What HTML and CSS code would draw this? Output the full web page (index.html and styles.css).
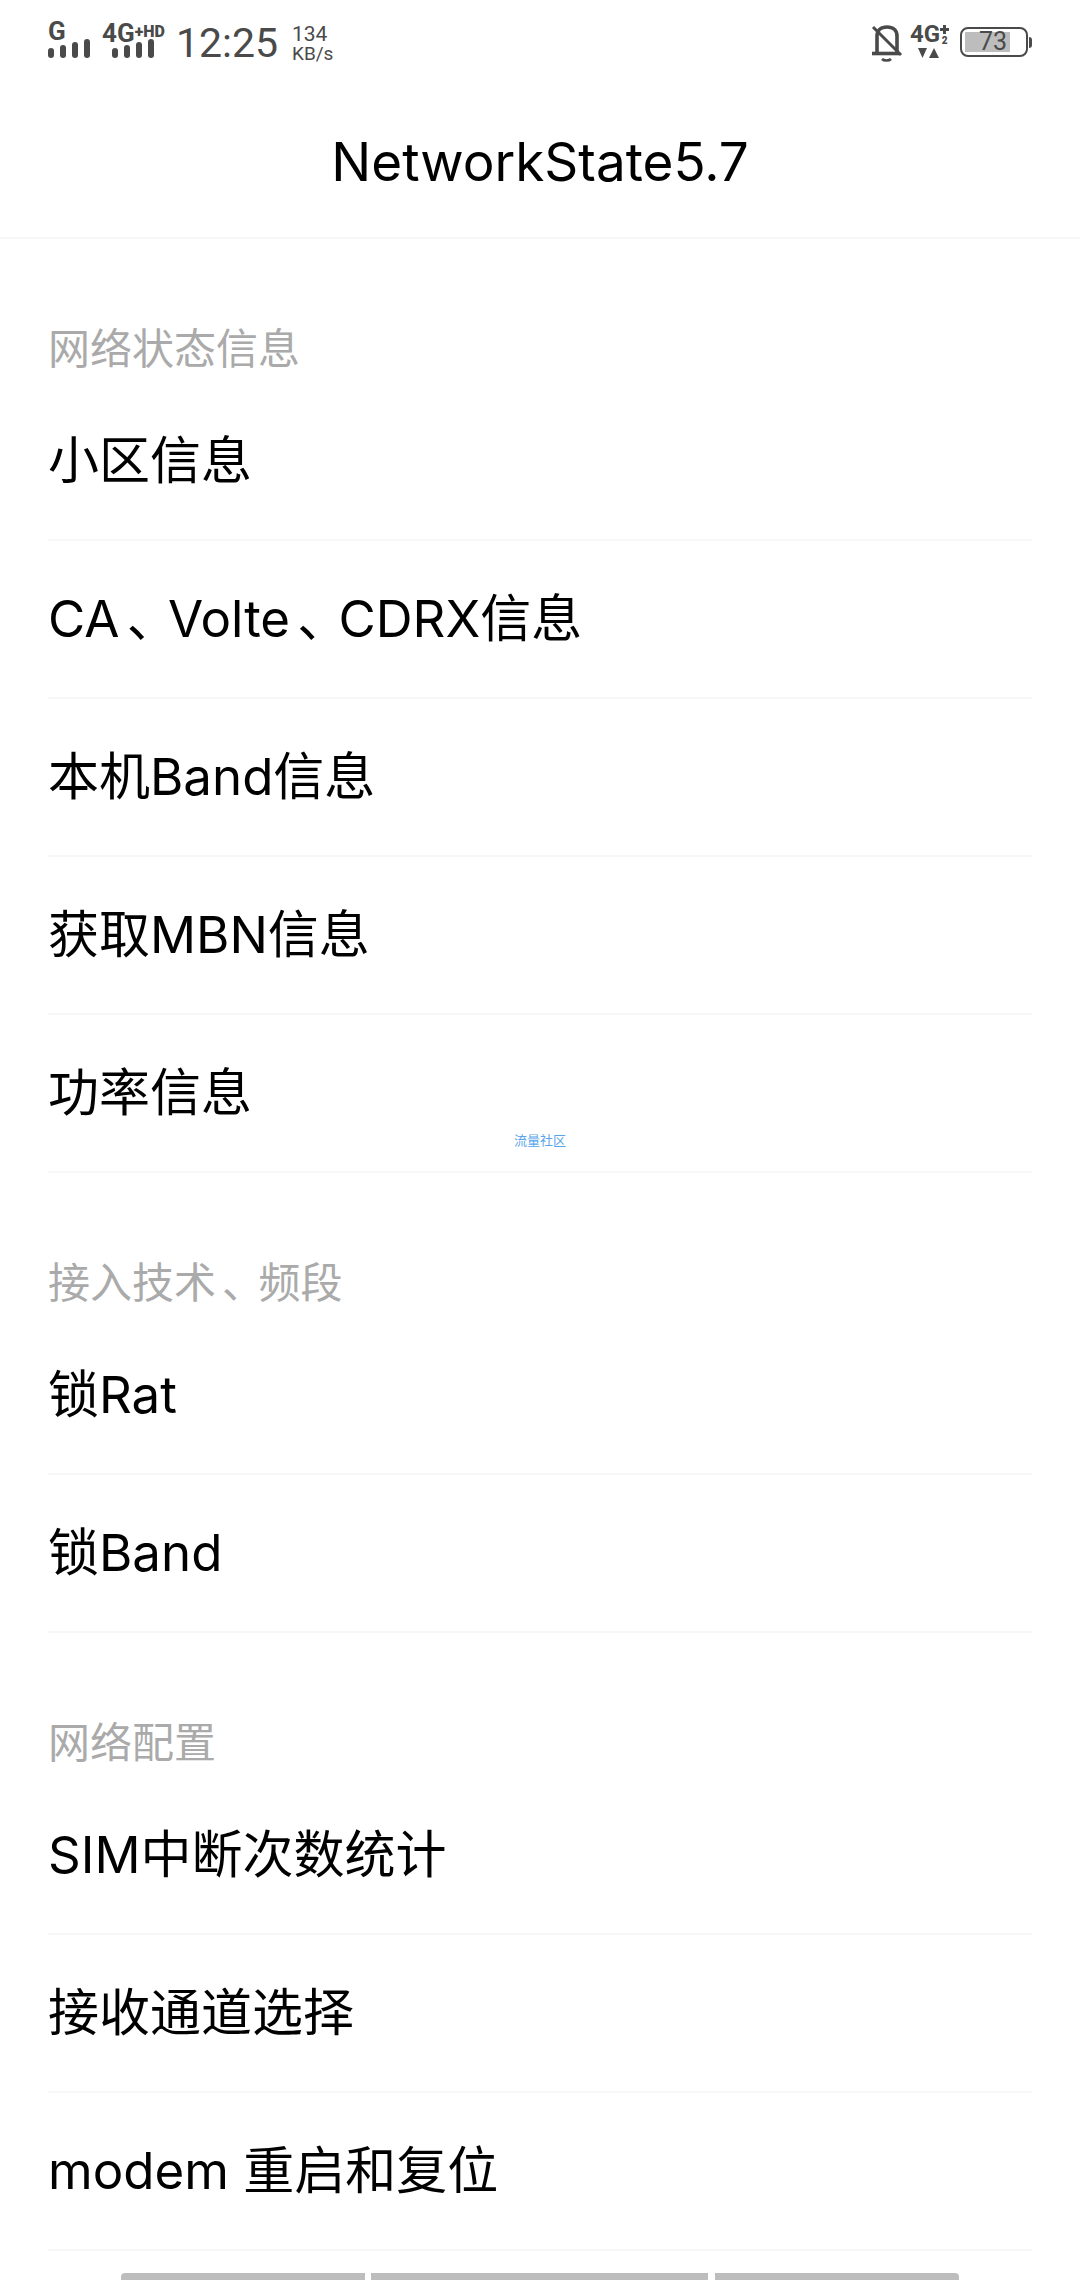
FILE: index.html
```html
<!DOCTYPE html>
<html lang="zh-CN">

<head>
    <meta charset="UTF-8">
    <meta name="viewport" content="width=device-width, initial-scale=1.0">
    <title>NetworkState5.7</title>
    <link rel="stylesheet" href="styles.css">
</head>

<body>

    <div class="screen">
        <!-- Status bar -->
        <div class="status-bar">
            <div class="status-left">
                <div class="signal signal-g">
                    <div class="signal-label">G</div>
                    <div class="bars"><i></i><i></i><i></i><i></i></div>
                </div>
                <div class="signal signal-4g">
                    <div class="signal-label">4G<span class="signal-extra">+HD</span></div>
                    <div class="bars"><i></i><i></i><i></i><i></i></div>
                </div>
                <div class="clock">12:25</div>
                <div class="speed">
                    <div class="speed-num">134</div>
                    <div>KB/s</div>
                </div>
            </div>
            <div class="status-right">
                <svg class="bell" width="34" height="38" viewBox="0 0 34 38" fill="none" stroke="#4a4a4a" stroke-width="3.6">
                    <path d="M7 28V12C7 6 11 3 17 3s10 3 10 9v16"/>
                    <path d="M2 29.5h27"/>
                    <path d="M12 35c2 2 7 2 9 0" stroke-width="2.6"/>
                    <path d="M3 3l28 28" stroke-width="3"/>
                </svg>
                <div class="net">
                    <div class="net-label">4G<span class="net-side">
                        <svg width="9" height="9" viewBox="0 0 9 9" stroke="#4a4a4a" stroke-width="3"><path d="M4.5 0v9M0 4.5h9"/></svg>
                        <b>2</b>
                    </span></div>
                    <svg class="net-arrows" width="21" height="10" viewBox="0 0 21 10" fill="#4a4a4a">
                        <path d="M0 0h9L4.5 10z"/>
                        <path d="M11 10h10L16 0z"/>
                    </svg>
                </div>
                <div class="battery">
                    <div class="battery-body">
                        <div class="battery-fill" style="width: 78%"></div>
                        <div class="battery-text">73</div>
                    </div>
                    <div class="battery-nub"></div>
                </div>
            </div>
        </div>

        <!-- Title -->
        <div class="title-bar">NetworkState5.7</div>

        <!-- Settings list -->
        <div class="section-title">网络状态信息</div>
        <div class="row">小区信息</div>
        <div class="row">CA<span class="comma">、</span>Volte<span class="comma">、</span>CDRX信息</div>
        <div class="row">本机Band信息</div>
        <div class="row">获取MBN信息</div>
        <div class="row">功率信息</div>

        <div class="section-title">接入技术<span class="comma">、</span>频段</div>
        <div class="row">锁Rat</div>
        <div class="row">锁Band</div>

        <div class="section-title">网络配置</div>
        <div class="row">SIM中断次数统计</div>
        <div class="row">接收通道选择</div>
        <div class="row">modem 重启和复位</div>

        <div class="scroll-tabs">
            <div class="tab tab-left"></div>
            <div class="tab tab-mid"></div>
            <div class="tab tab-right"></div>
        </div>

        <div class="watermark">流量社区</div>
    </div>

</body>

</html>
```

FILE: styles.css
```css
/* Global Styles */
body {
    margin: 0;
    padding: 0;
    background-color: #fff;
    font-family: 'Inter', 'Noto Sans CJK SC', sans-serif;
}

.screen {
    position: relative;
    width: 1080px;
    height: 2280px;
    overflow: hidden;
    background-color: #fff;
    color: #000;
}

/* Status bar */
.status-bar {
    display: flex;
    justify-content: space-between;
    height: 80px;
    padding: 0 48px;
    color: #4a4a4a;
}

.status-left {
    display: flex;
    align-items: flex-start;
    padding-top: 23px;
}

.signal {
    display: flex;
    flex-direction: column;
    width: 54px;
}

.signal-4g {
    width: 62px;
    margin-right: 14px;
}

.signal-label {
    height: 16px;
    font-family: 'Roboto', sans-serif;
    font-size: 26px;
    font-weight: 700;
    line-height: 17px;
    white-space: nowrap;
}

.signal-extra {
    font-size: 16px;
    font-weight: 900;
    vertical-align: 5px;
}

.bars {
    display: flex;
    gap: 6px;
}

.bars i {
    display: block;
    width: 6px;
    height: 10px;
    margin-top: 9px;
    background-color: #4a4a4a;
    border-radius: 3px;
}

.bars i:nth-child(2) {
    height: 13px;
    margin-top: 6px;
}

.bars i:nth-child(3) {
    height: 16px;
    margin-top: 3px;
}

.bars i:nth-child(4) {
    height: 19px;
    margin-top: 0;
}

.signal-4g .bars {
    padding-left: 10px;
}

.clock {
    width: 116px;
    margin: -2px 0 0 -2px;
    font-family: 'Roboto', sans-serif;
    font-size: 41px;
    line-height: 44px;
}

.speed {
    font-family: 'Roboto', sans-serif;
    font-size: 19px;
    line-height: 20px;
    margin-top: 1px;
}

.speed-num {
    font-size: 21px;
}

.status-right {
    display: flex;
    align-items: flex-start;
    padding-top: 24px;
}

.bell {
    margin-right: 6px;
}

.net {
    width: 50px;
}

.net-label {
    display: flex;
    height: 22px;
    font-family: 'Roboto', sans-serif;
    font-size: 24px;
    font-weight: 700;
    line-height: 20px;
}

.net-side {
    display: flex;
    flex-direction: column;
    align-items: center;
    margin-top: 1px;
    font-size: 10px;
    line-height: 10px;
}

.net-side svg {
    display: block;
    margin-bottom: 2px;
}

.net-arrows {
    display: block;
    margin: 2px 0 0 8px;
}

.battery {
    display: flex;
    align-items: center;
    margin-top: 3px;
}

.battery-body {
    position: relative;
    box-sizing: border-box;
    width: 68px;
    height: 30px;
    padding: 3px;
    border: 2px solid #4a4a4a;
    border-radius: 8px;
}

.battery-fill {
    height: 100%;
    background-color: #bdbdbd;
}

.battery-text {
    position: absolute;
    top: 0;
    left: 0;
    width: 62px;
    font-family: 'Roboto', sans-serif;
    font-size: 25px;
    line-height: 26px;
    text-align: center;
}

.battery-nub {
    width: 3px;
    height: 11px;
    margin-left: 1px;
    background-color: #4a4a4a;
    border-radius: 0 4px 4px 0;
}

/* Title */
.title-bar {
    box-sizing: border-box;
    height: 159px;
    padding-top: 48px;
    border-bottom: 2px solid #f7f7f7;
    font-size: 53px;
    line-height: 68px;
    text-align: center;
}

/* List */
.section-title {
    box-sizing: border-box;
    height: 144px;
    padding: 84px 48px 0;
    color: #aaa;
    font-size: 42px;
    line-height: 52px;
}

.row {
    box-sizing: border-box;
    height: 158px;
    margin: 0 48px;
    padding-top: 44px;
    border-bottom: 2px solid #f7f7f7;
    font-size: 51px;
    line-height: 68px;
}

/* The comma sits nearer the middle of its cell than the font draws it */
.comma {
    font-feature-settings: "palt";
    padding: 0 0.36em 0 0.15em;
}

.row .comma {
    padding-right: 0.3em;
}

/* Horizontal scroll marks at the bottom edge */
.scroll-tabs {
    display: flex;
    gap: 6px;
    margin: 22px 0 0 121px;
}

.tab {
    height: 7px;
    background-color: #bdbdbd;
}

.tab-left {
    width: 244px;
    border-radius: 4px 0 0 0;
}

.tab-mid {
    width: 337px;
}

.tab-right {
    width: 244px;
    margin-left: 1px;
    border-radius: 0 4px 0 0;
}

.watermark {
    position: absolute;
    top: 1131px;
    left: 0;
    width: 100%;
    color: #5aa5ea;
    font-size: 13px;
    line-height: 18px;
    text-align: center;
}
```
